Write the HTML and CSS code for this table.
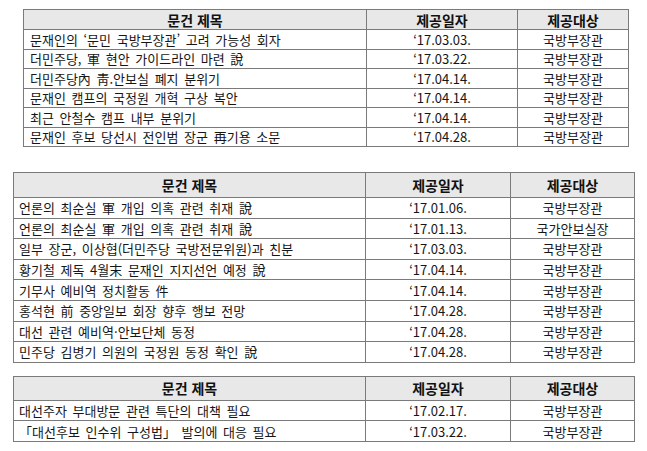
FILE: index.html
```html
<!DOCTYPE html>
<html lang="ko">
<head>
<meta charset="utf-8">
<link rel="stylesheet" href="styles.css">
</head>
<body>
<div class="page">
  <table class="doc t1">
    <colgroup><col class="c1"><col class="c2"><col class="c3"></colgroup>
    <tr class="head"><th>문건 제목</th><th>제공일자</th><th>제공대상</th></tr>
    <tr><td class="title">문재인의 ‘문민 국방부장관’ 고려 가능성 회자</td><td>‘17.03.03.</td><td>국방부장관</td></tr>
    <tr><td class="title">더민주당, 軍 현안 가이드라인 마련 說</td><td>‘17.03.22.</td><td>국방부장관</td></tr>
    <tr><td class="title">더민주당內 靑.안보실 폐지 분위기</td><td>‘17.04.14.</td><td>국방부장관</td></tr>
    <tr><td class="title">문재인 캠프의 국정원 개혁 구상 복안</td><td>‘17.04.14.</td><td>국방부장관</td></tr>
    <tr><td class="title">최근 안철수 캠프 내부 분위기</td><td>‘17.04.14.</td><td>국방부장관</td></tr>
    <tr><td class="title">문재인 후보 당선시 전인범 장군 再기용 소문</td><td>‘17.04.28.</td><td>국방부장관</td></tr>
  </table>

  <table class="doc t2">
    <colgroup><col class="c1"><col class="c2"><col class="c3"></colgroup>
    <tr class="head"><th>문건 제목</th><th>제공일자</th><th>제공대상</th></tr>
    <tr><td class="title">언론의 최순실 軍 개입 의혹 관련 취재 說</td><td>‘17.01.06.</td><td>국방부장관</td></tr>
    <tr><td class="title">언론의 최순실 軍 개입 의혹 관련 취재 說</td><td>‘17.01.13.</td><td>국가안보실장</td></tr>
    <tr><td class="title">일부 장군, 이상협(더민주당 국방전문위원)과 친분</td><td>‘17.03.03.</td><td>국방부장관</td></tr>
    <tr><td class="title">황기철 제독 4월末 문재인 지지선언 예정 說</td><td>‘17.04.14.</td><td>국방부장관</td></tr>
    <tr><td class="title">기무사 예비역 정치활동 件</td><td>‘17.04.14.</td><td>국방부장관</td></tr>
    <tr><td class="title">홍석현 前 중앙일보 회장 향후 행보 전망</td><td>‘17.04.28.</td><td>국방부장관</td></tr>
    <tr><td class="title">대선 관련 예비역·안보단체 동정</td><td>‘17.04.28.</td><td>국방부장관</td></tr>
    <tr><td class="title">민주당 김병기 의원의 국정원 동정 확인 說</td><td>‘17.04.28.</td><td>국방부장관</td></tr>
  </table>

  <table class="doc t3">
    <colgroup><col class="c1"><col class="c2"><col class="c3"></colgroup>
    <tr class="head"><th>문건 제목</th><th>제공일자</th><th>제공대상</th></tr>
    <tr><td class="title">대선주자 부대방문 관련 특단의 대책 필요</td><td>‘17.02.17.</td><td>국방부장관</td></tr>
    <tr><td class="title">「대선후보 인수위 구성법」 발의에 대응 필요</td><td>‘17.03.22.</td><td>국방부장관</td></tr>
  </table>
</div>
</body>
</html>
```

FILE: styles.css
```css
html, body {
  margin: 0;
  padding: 0;
  background: #ffffff;
}

.page {
  display: flex;
  flex-direction: column;
  padding-top: 9px;
  font-family: "Noto Sans CJK KR", "Noto Sans", sans-serif;
  color: #161616;
}

.doc {
  border-collapse: collapse;
  table-layout: fixed;
  font-size: 13px;
  line-height: 1;
}

.doc th,
.doc td {
  border: 1px solid #7a7a7a;
  padding: 0;
  text-align: center;
  vertical-align: middle;
  white-space: nowrap;
  overflow: hidden;
}

.doc th {
  background: #e8e8e8;
  font-weight: 700;
  font-size: 14px;
  color: #111111;
}

.doc td.title {
  text-align: left;
  padding-left: 6px;
  word-spacing: 2px;
}

/* table 1 */
.t1 {
  margin-left: 23px;
  width: 605px;
}
.t1 .c1 { width: 343px; }
.t1 .c2 { width: 151px; }
.t1 .c3 { width: 111px; }
.t1 tr.head { height: 20px; }
.t1 tr { height: 19.5px; }

/* table 2 */
.t2 {
  margin-left: 13px;
  margin-top: 25px;
  width: 621px;
}
.t2 .c1 { width: 352px; }
.t2 .c2 { width: 145px; }
.t2 .c3 { width: 124px; }
.t2 tr.head { height: 25px; }
.t2 tr { height: 20.6px; }

/* table 3 */
.t3 {
  margin-left: 13px;
  margin-top: 13px;
  width: 621px;
}
.t3 .c1 { width: 352px; }
.t3 .c2 { width: 145px; }
.t3 .c3 { width: 124px; }
.t3 tr.head { height: 24px; }
.t3 tr { height: 20.5px; }

.t2 td.title,
.t3 td.title {
  padding-left: 5px;
}
```
